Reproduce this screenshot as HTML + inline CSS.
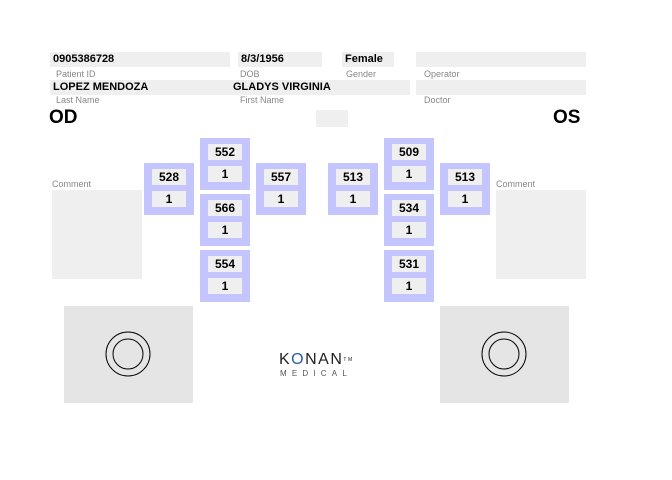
<!DOCTYPE html>
<html><head><style>
body{margin:0;width:672px;height:480px;background:#fff;position:relative;font-family:"Liberation Sans",Arial,sans-serif;overflow:hidden}
.a{position:absolute}
.f{position:absolute;background:#efefef;font-size:11px;font-weight:bold;color:#000;line-height:15px;padding-left:3px;box-sizing:border-box}
.l{position:absolute;font-size:9px;color:#888;line-height:10px}
.b{position:absolute;width:50px;height:52px;background:#c4c4ff}
.c{position:absolute;left:8px;width:34px;height:16px;background:#efefef;font-size:12px;font-weight:bold;text-align:center;line-height:16px}
.g{position:absolute;background:#e5e5e5}
</style></head><body>
<div class="f" style="left:50px;top:52px;width:180px;height:15px">0905386728</div>
<div class="f" style="left:238px;top:52px;width:84px;height:15px">8/3/1956</div>
<div class="f" style="left:342px;top:52px;width:52px;height:15px">Female</div>
<div class="f" style="left:416px;top:52px;width:170px;height:15px"></div>
<div class="l" style="left:56px;top:69px">Patient ID</div>
<div class="l" style="left:240px;top:69px">DOB</div>
<div class="l" style="left:346px;top:69px">Gender</div>
<div class="l" style="left:424px;top:69px">Operator</div>
<div class="f" style="left:50px;top:80px;width:180px;height:15px">LOPEZ MENDOZA</div>
<div class="f" style="left:230px;top:80px;width:180px;height:15px">GLADYS VIRGINIA</div>
<div class="f" style="left:416px;top:80px;width:170px;height:15px"></div>
<div class="l" style="left:56px;top:95px">Last Name</div>
<div class="l" style="left:240px;top:95px">First Name</div>
<div class="l" style="left:424px;top:95px">Doctor</div>
<div class="a" style="left:49px;top:107px;font-size:19px;font-weight:bold">OD</div>
<div class="a" style="left:553px;top:107px;font-size:19px;font-weight:bold">OS</div>
<div class="g" style="left:316px;top:110px;width:32px;height:17px;background:#efefef"></div>
<div class="l" style="left:52px;top:179px">Comment</div>
<div class="g" style="left:52px;top:190px;width:90px;height:89px;background:#efefef"></div>
<div class="l" style="left:496px;top:179px">Comment</div>
<div class="g" style="left:496px;top:190px;width:90px;height:89px;background:#efefef"></div>

<div class="b" style="left:144px;top:163px"><div class="c" style="top:6px">528</div><div class="c" style="top:28px">1</div></div>
<div class="b" style="left:200px;top:138px"><div class="c" style="top:6px">552</div><div class="c" style="top:28px">1</div></div>
<div class="b" style="left:200px;top:194px"><div class="c" style="top:6px">566</div><div class="c" style="top:28px">1</div></div>
<div class="b" style="left:200px;top:250px"><div class="c" style="top:6px">554</div><div class="c" style="top:28px">1</div></div>
<div class="b" style="left:256px;top:163px"><div class="c" style="top:6px">557</div><div class="c" style="top:28px">1</div></div>
<div class="b" style="left:328px;top:163px"><div class="c" style="top:6px">513</div><div class="c" style="top:28px">1</div></div>
<div class="b" style="left:384px;top:138px"><div class="c" style="top:6px">509</div><div class="c" style="top:28px">1</div></div>
<div class="b" style="left:384px;top:194px"><div class="c" style="top:6px">534</div><div class="c" style="top:28px">1</div></div>
<div class="b" style="left:384px;top:250px"><div class="c" style="top:6px">531</div><div class="c" style="top:28px">1</div></div>
<div class="b" style="left:440px;top:163px"><div class="c" style="top:6px">513</div><div class="c" style="top:28px">1</div></div>

<svg class="a" style="left:64px;top:306px" width="129" height="97"><rect width="129" height="97" fill="#e5e5e5"/><circle cx="64" cy="48" r="22" fill="none" stroke="#000"/><circle cx="64" cy="48" r="15" fill="none" stroke="#000"/></svg>
<svg class="a" style="left:440px;top:306px" width="129" height="97"><rect width="129" height="97" fill="#e5e5e5"/><circle cx="64" cy="48" r="22" fill="none" stroke="#000"/><circle cx="64" cy="48" r="15" fill="none" stroke="#000"/></svg>

<div class="a" style="left:279px;top:352px;font-size:16px;letter-spacing:1.5px;color:#222;line-height:16px">K<span style="color:#2a5aa8">O</span>NAN<sup style="font-size:5px;vertical-align:top">TM</sup></div>
<div class="a" style="left:280px;top:369px;font-size:8px;letter-spacing:5.2px;color:#555;line-height:9px">MEDICAL</div>
</body></html>
